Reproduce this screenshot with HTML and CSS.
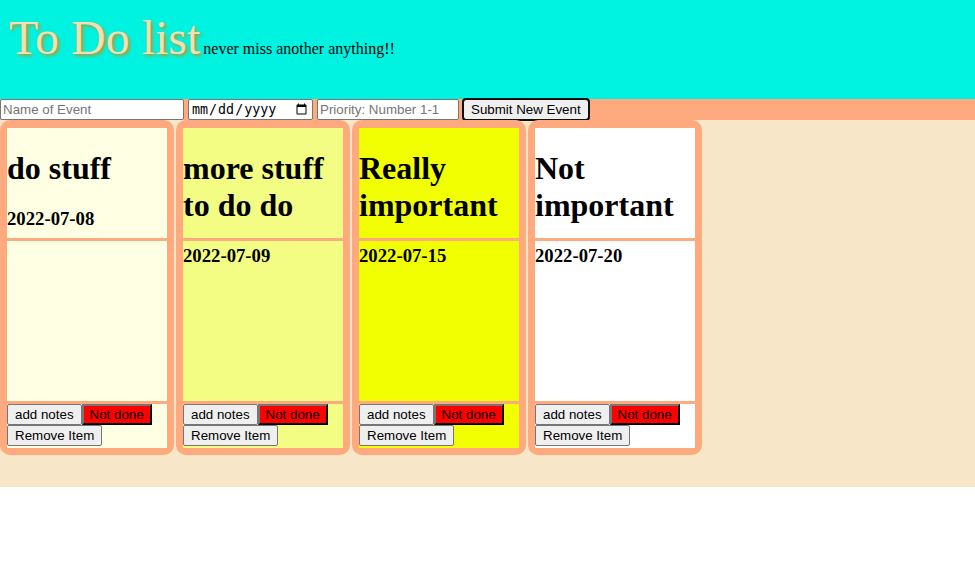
FILE: index.html
```html
<!DOCTYPE html>
<html>
<head>
<meta charset="utf-8">
<title>To Do list</title>
<link rel="stylesheet" href="styles.css">
</head>
<body>
<header class="header">
  <span class="title">To Do list</span><span class="tagline">never miss another anything!!</span>
</header>
<form class="entry-form">
  <input class="field field-name" type="text" placeholder="Name of Event">
  <input class="field field-date" type="date">
  <input class="field field-priority" type="text" placeholder="Priority: Number 1-1">
  <button class="submit" type="button">Submit New Event</button>
</form>
<main class="board">
  <div class="card p1">
    <div class="card-top"><h1>do stuff</h1><h3>2022-07-08</h3></div>
    <div class="card-notes"></div>
    <div class="card-actions">
      <div class="btn-row"><button class="btn">add notes</button><button class="btn notdone">Not done</button></div>
      <div class="btn-row"><button class="btn">Remove Item</button></div>
    </div>
  </div>
  <div class="card p2">
    <div class="card-top"><h1>more stuff to do do</h1><h3>2022-07-09</h3></div>
    <div class="card-notes"></div>
    <div class="card-actions">
      <div class="btn-row"><button class="btn">add notes</button><button class="btn notdone">Not done</button></div>
      <div class="btn-row"><button class="btn">Remove Item</button></div>
    </div>
  </div>
  <div class="card p3">
    <div class="card-top"><h1>Really important</h1><h3>2022-07-15</h3></div>
    <div class="card-notes"></div>
    <div class="card-actions">
      <div class="btn-row"><button class="btn">add notes</button><button class="btn notdone">Not done</button></div>
      <div class="btn-row"><button class="btn">Remove Item</button></div>
    </div>
  </div>
  <div class="card p4">
    <div class="card-top"><h1>Not important</h1><h3>2022-07-20</h3></div>
    <div class="card-notes"></div>
    <div class="card-actions">
      <div class="btn-row"><button class="btn">add notes</button><button class="btn notdone">Not done</button></div>
      <div class="btn-row"><button class="btn">Remove Item</button></div>
    </div>
  </div>
</main>
</body>
</html>
```
FILE: styles.css
```css
html, body {
  margin: 0;
  padding: 0;
  background: #ffffff;
  font-family: "Liberation Serif", "Times New Roman", serif;
  font-size: 16px;
}

.header {
  box-sizing: border-box;
  height: 99px;
  padding: 10px 0 0 9px;
  background: #00f2e0;
  line-height: normal;
}

.title {
  font-size: 48px;
  color: #f5deb3;
  text-shadow: 2px 2px 3px #b09a2a;
}

.tagline {
  margin-left: 3px;
  font-size: 16px;
  color: #000;
}

.entry-form {
  display: flex;
  align-items: center;
  gap: 4px;
  height: 21px;
  background: #ffa97f;
}

.field {
  box-sizing: border-box;
  height: 21px;
  margin: 0;
  font-family: "Liberation Sans", Arial, sans-serif;
  font-size: 13.333px;
  padding: 1px 2px;
  border: 1px solid #767676;
  border-radius: 2px;
  background: #fff;
}

.field::placeholder {
  color: #757575;
}

.field-name { width: 184px; }
.field-date {
  width: 125px;
  font-family: "DejaVu Sans Mono", monospace;
}
.field-priority { width: 142px; }

.submit {
  box-sizing: border-box;
  height: 21px;
  margin: 0;
  font-family: "Liberation Sans", Arial, sans-serif;
  font-size: 13.333px;
  padding: 1px 7px;
  border: 1px solid #767676;
  border-radius: 3px;
  background: #efefef;
  color: #000;
  outline: 2px solid #101010;
  outline-offset: -1px;
}

.board {
  display: flex;
  align-items: flex-start;
  gap: 2px;
  padding-bottom: 32px;
  background: #f7e6c8;
}

.card {
  width: 160px;
  padding: 8px 7px 7px 7px;
  background: #ffa97f;
  border-radius: 10px;
}

.card-top {
  display: flow-root;
  height: 110px;
  margin-bottom: 3px;
}

.card-top h1 {
  font-size: 32px;
  margin: 22px 0 21px;
  line-height: 37px;
}

.card-top h3 {
  font-size: 18.72px;
  margin: 0;
  line-height: 22px;
}

.card-notes {
  height: 160px;
  margin-bottom: 3px;
}

.card-actions {
  height: 44px;
}

.btn-row {
  display: flex;
}

.btn {
  box-sizing: border-box;
  height: 21px;
  margin: 0;
  font-family: "Liberation Sans", Arial, sans-serif;
  font-size: 13.333px;
  padding: 1px 7px;
  border: 1px solid #767676;
  border-radius: 2px;
  background: #efefef;
  color: #000;
}

.btn.notdone {
  padding: 1px 6px;
  background: #ff0000;
  border: 2px outset #767676;
  border-radius: 0;
  border-right-color: #222;
  border-bottom-color: #222;
}

.p1 .card-top, .p1 .card-notes, .p1 .card-actions { background: #ffffe4; }
.p2 .card-top, .p2 .card-notes, .p2 .card-actions { background: #f4fd83; }
.p3 .card-top, .p3 .card-notes, .p3 .card-actions { background: #f2ff00; }
.p4 .card-top, .p4 .card-notes, .p4 .card-actions { background: #ffffff; }
```
